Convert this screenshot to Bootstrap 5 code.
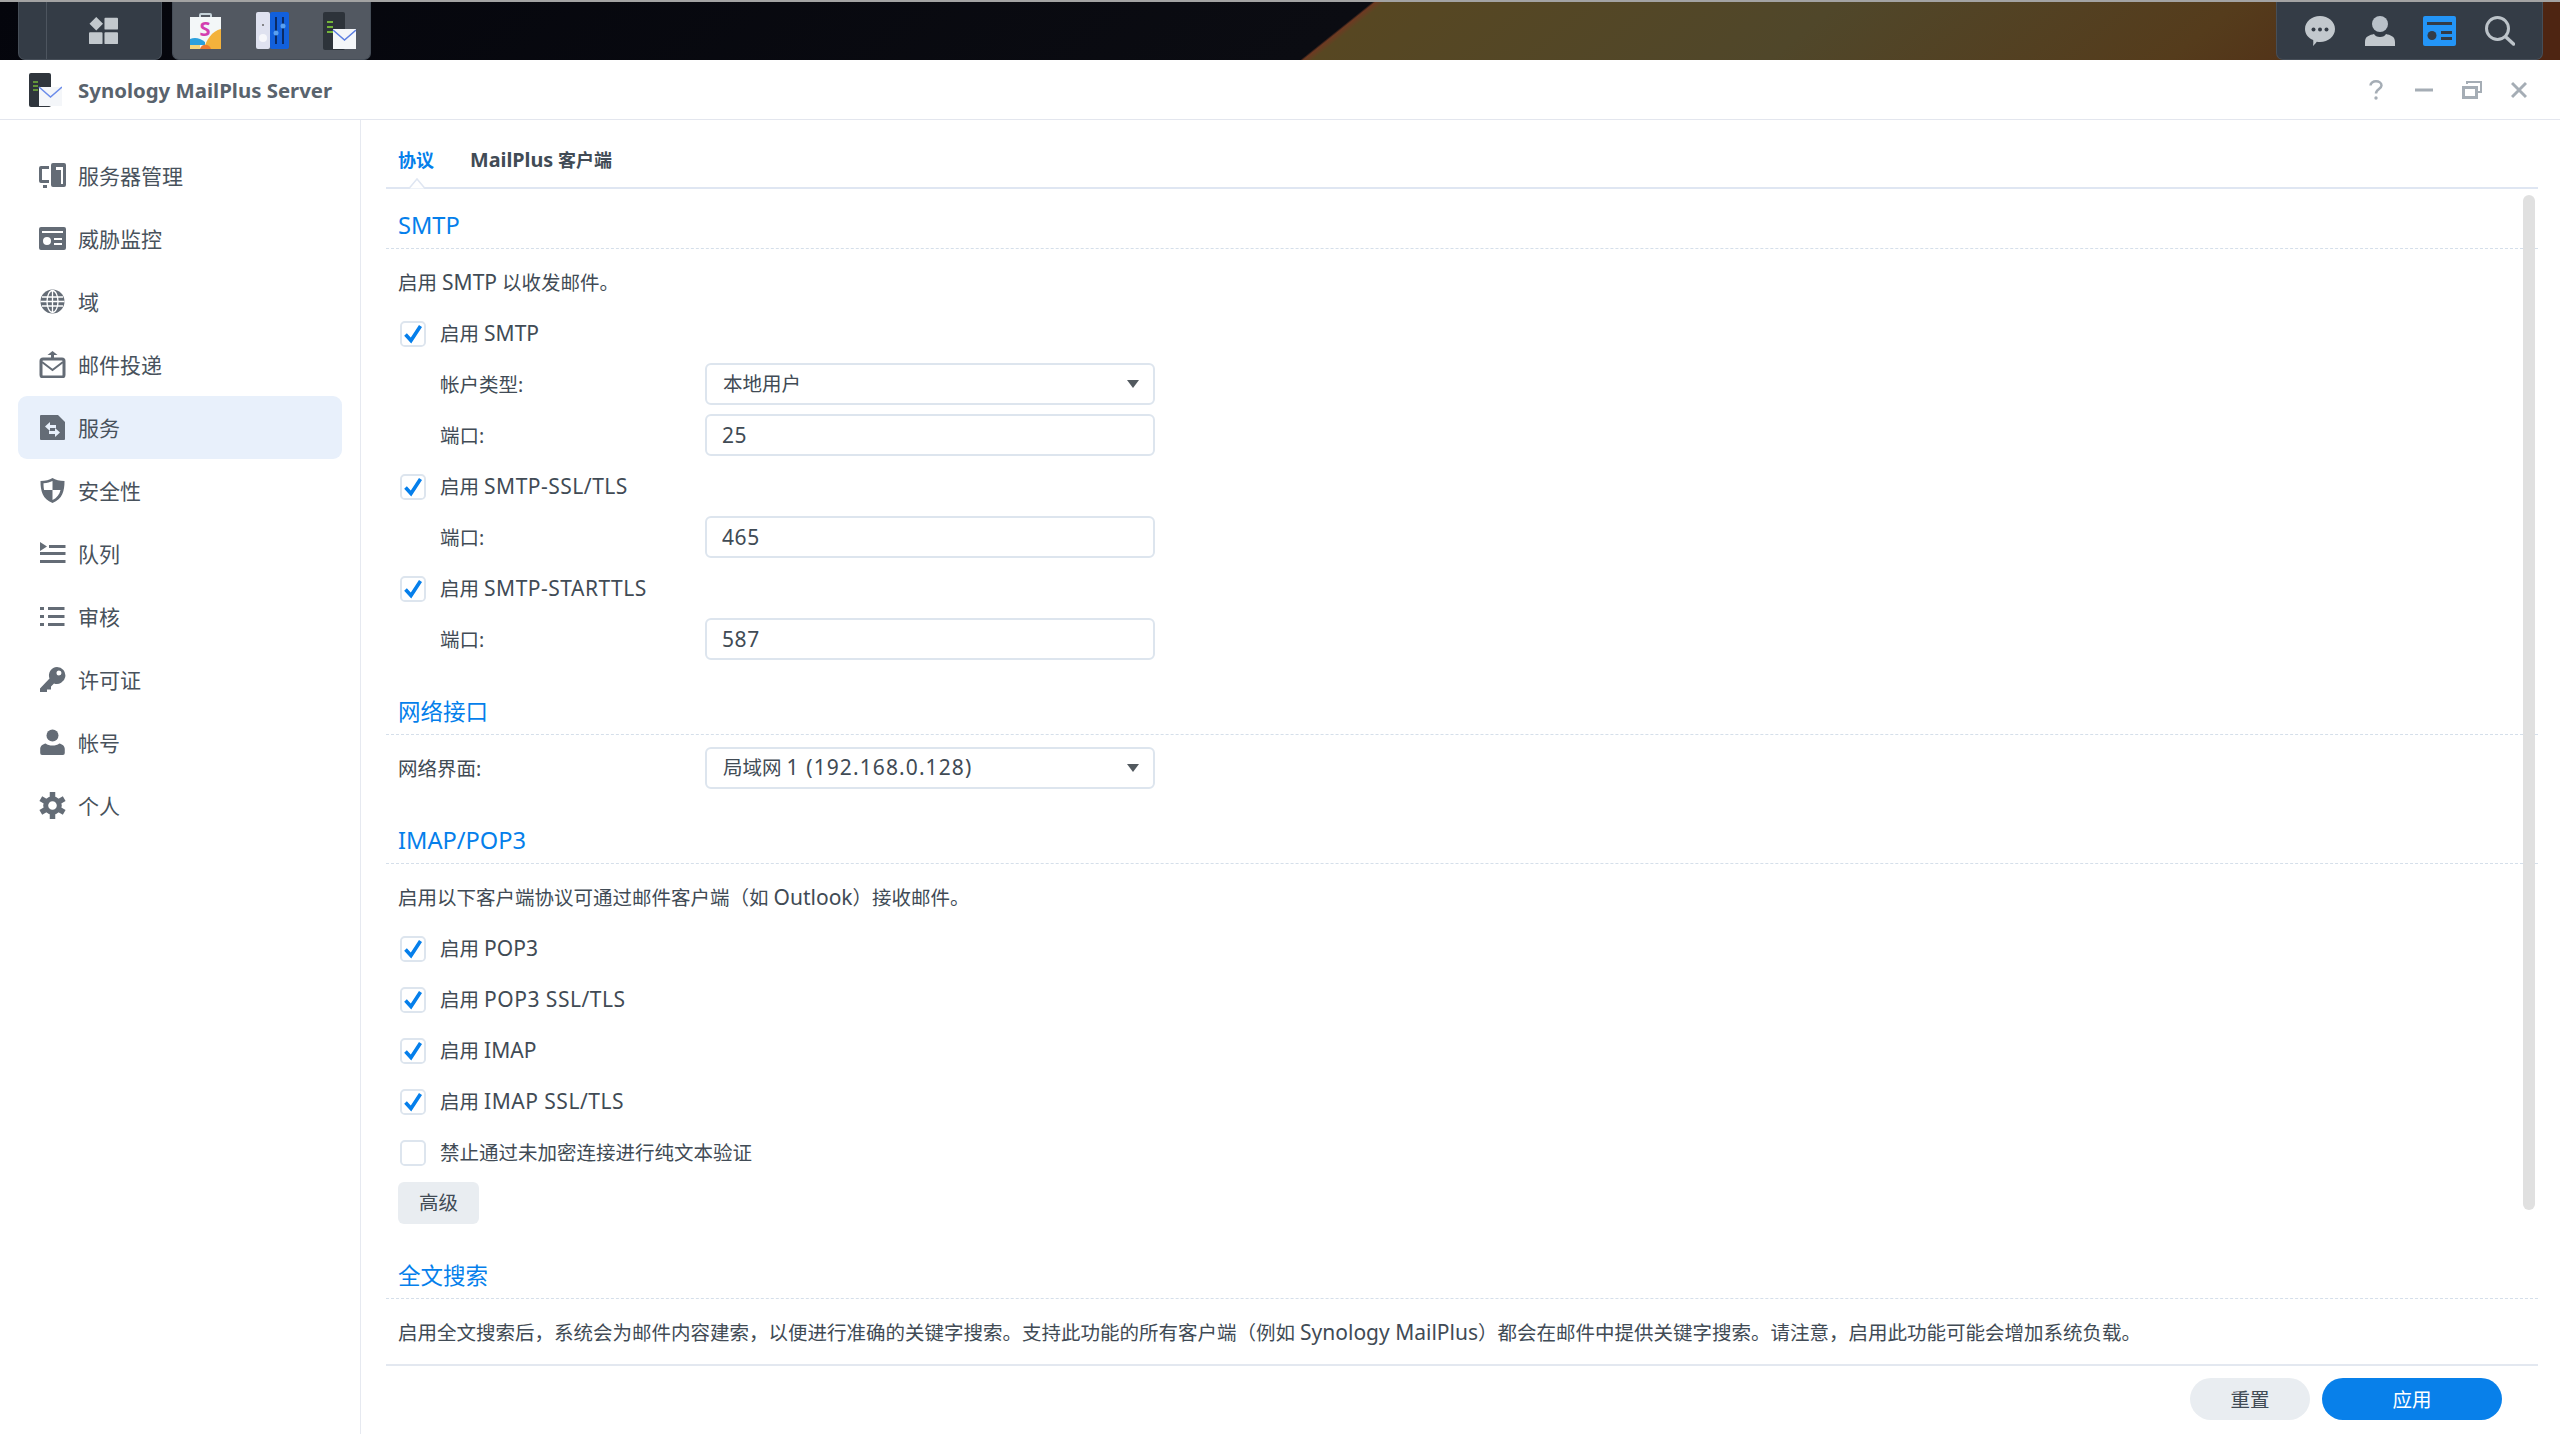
<!DOCTYPE html>
<html lang="zh-CN">
<head>
<meta charset="utf-8">
<title>Synology MailPlus Server</title>
<link href="https://cdn.jsdelivr.net/npm/bootstrap@5.3.0/dist/css/bootstrap.min.css" rel="stylesheet">
<style>
html,body{height:100%;margin:0;overflow:hidden}
body{font-family:"Noto Sans","Noto Sans CJK SC",sans-serif;font-size:19.5px;color:#414b55;background:#fff}
.lt{font-size:21px}
.lt-w{font-size:21px;letter-spacing:.5px}
.lt-n{font-size:21px;letter-spacing:1.1px}
.top-strip{height:60px;flex:none;border-top:2px solid #a3a3a3;background:linear-gradient(141.3deg,#04050c 0,#0b0c12 858px,#6e3a22 860px,#574722 866px,#50472a 1150px,#553c1c 1400px,#4e2512 1600px)}
.dock{background:#343c46;border:1px solid #464e58;border-top:0;border-radius:0 0 7px 7px;height:58px}
.dock-menu{width:144px;margin-left:18px}
.dock-sep{width:28px;border-right:1px solid #4d555f;height:100%;flex:none}
.dock-glyph{margin-left:42px}
.dock-apps{width:199px;margin-left:10px;background:#525861;padding-left:16px;gap:34px}
.dock-tray{width:267px;margin-left:auto;margin-right:17px;gap:30px;justify-content:center}
.tray-wide{margin:0 -1.5px}
.win-frame{flex:1;min-height:0;border-radius:6px 6px 0 0;background:#fff}
.win-title{height:60px;flex:none;border-bottom:1px solid #e3e6ee;padding-left:29px;padding-right:33px}
.win-name{font-weight:700;font-size:20.4px;color:#59636d;margin-left:16px;padding-top:2px}
.win-ctl{gap:29px}
.ctl-help{margin-right:3px}
.side-col{width:361px;flex:none;border-right:1px solid #e6e9f0;padding:24px 18px 0}
.side-item{height:63px;border-radius:9px;padding-left:21px;font-size:21px;color:#48525c}
.side-item svg{width:27px;height:27px;margin-right:12px;flex:none}
.side-txt{padding-top:2px}
.side-item.on{background:#e8f0fb}
.main-col{min-width:0}
.tab-strip{height:69px;flex:none;margin:0 22px 0 25px;border-bottom:2px solid #dfe6f2;padding-left:12px;gap:36px;position:relative}
.tab-link{font-weight:700;font-size:18px;color:#414b55;padding-top:27px;text-decoration:none}
.tab-link.mix{padding-top:25px}
.tab-link .tl{font-size:19.8px}
.tab-link.on{color:#057feb}
.tab-notch{position:absolute;left:21px;bottom:-2px;width:20px;height:12px}
.scroll-pane{flex:1;min-height:0;overflow:hidden;margin:0 22px 0 25px;padding-left:12px;position:relative}
.thumb-bar{position:absolute;right:3px;top:6px;width:12px;height:1015px;border-radius:6px;background:#e0e0e0}
.sec-head{height:60px;margin-left:-12px;padding-left:12px;padding-bottom:4px;border-bottom:1px dashed #d5dfea;font-size:22.5px;line-height:36px;color:#057feb;display:flex;align-items:flex-end;margin-top:10px;font-weight:400}
.sec-head.first{margin-top:0}
.sec-head.latin{font-size:23.6px;padding-bottom:5px}
.sec-head.gap-big{margin-top:15px}
.sec-body{margin-top:8px}
.f-row{height:51px;white-space:pre}
.f-row.ind{padding-left:42px}
.f-row .lbl{width:307px;flex:none}
.f-row.ind .lbl{width:265px}
.chk{width:26px;height:26px;margin:0 14px 0 2px!important;flex:none;border:2px solid #dde5ee;border-radius:6px;background-color:#fff;float:none}
.chk:checked{background-color:#fff;border-color:#dde5ee;background-size:22px 22px;background-image:url("data:image/svg+xml,%3csvg xmlns='http://www.w3.org/2000/svg' viewBox='0 0 22 22'%3e%3cpath fill='none' stroke='%23057feb' stroke-width='3.6' d='M3.500 11.500l5.500 6L18.500 3'/%3e%3c/svg%3e")}
.chk:focus{box-shadow:none;border-color:#dde5ee}
.fld{width:450px;height:42px;margin-bottom:1px;border:2px solid #dde5ee;border-radius:6px;font-size:19.5px;color:#414b55;padding:0 16px;box-shadow:none!important;white-space:pre}
.fld:focus{color:#414b55;border-color:#dde5ee}
input.fld{font-size:21px;letter-spacing:.6px;padding-left:15px}
.form-select.fld{background-size:16px 10px;background-position:right 12px center;background-image:url("data:image/svg+xml,%3csvg xmlns='http://www.w3.org/2000/svg' viewBox='0 0 16 10'%3e%3cpath fill='%2352595f' d='M2 1h12L8 9z'/%3e%3c/svg%3e")}
.btn-adv{width:81px;height:42px;padding:0;background:#e9edf1;border:0;border-radius:6px;color:#414b55;font-size:19.5px;margin-top:4px;display:block}
.foot-bar{height:70px;flex:none;margin:0 0 0 25px;padding:14px 58px 0 0;position:relative;gap:12px}
.foot-line{position:absolute;left:0;right:22px;top:0;border-top:2px solid #e3e8f0}
.pill{height:42px;border:0;border-radius:21px;padding:1px 0 0;font-size:19.5px}
.pill-a{width:120px;background:#e9edf1;color:#414b55}
.pill-b{width:180px;background:#0880ea;color:#fff}
</style>
</head>
<body class="d-flex flex-column">

<div class="top-strip d-flex">
  <div class="dock dock-menu d-flex align-items-center">
    <div class="dock-sep"></div>
    <svg class="dock-glyph" width="29" height="29" viewBox="0 0 30 32" preserveAspectRatio="none"><path fill="#c2c8cd" d="M7.500 1l7 7.500-7 7.500L.5 8.500zM17 2h12a1 1 0 0 1 1 1v11a1 1 0 0 1-1 1H17a1 1 0 0 1-1-1V3a1 1 0 0 1 1-1zM1 18h12a1 1 0 0 1 1 1v11a1 1 0 0 1-1 1H1a1 1 0 0 1-1-1V19a1 1 0 0 1 1-1zM17 18h12a1 1 0 0 1 1 1v11a1 1 0 0 1-1 1H17a1 1 0 0 1-1-1V19a1 1 0 0 1 1-1z"/></svg>
  </div>
  <div class="dock dock-apps d-flex align-items-center">
    <svg width="33" height="38" viewBox="0 0 33 38"><path fill="none" stroke="#c5d2d8" stroke-width="2" d="M11 6V3a1 1 0 0 1 1-1h9a1 1 0 0 1 1 1v3"/><path fill="#f3f7f8" d="M1 5h31v32H1z"/><path fill="#f3b23c" d="M32 17v20H15c2-9 8-18 17-20z"/><path fill="#2ba0dc" d="M1 27c5-2 10-1 15 3v3H1z"/><path fill="#ee7b30" d="M11 37c1-5 9-6 11 0z"/><path fill="#f4d57a" d="M1 33h10v4H1z"/><text x="16" y="24" font-size="20" font-weight="700" text-anchor="middle" fill="#d33fb0" font-family="Noto Sans">S</text></svg>
    <svg width="33" height="37" viewBox="0 0 33 37"><rect width="14" height="37" rx="2" fill="#dfe2f0"/><circle cx="7" cy="26" r="4" fill="#f6f7fb"/><circle cx="7" cy="13" r="1" fill="#666"/><rect x="14" width="19" height="37" rx="2" fill="#1260dc"/><path stroke="#0b2b66" stroke-width="2" d="M20 5v27M27 5v27"/><circle cx="20" cy="21" r="2.500" fill="#5aa0f0"/><circle cx="27" cy="14" r="2.500" fill="#5aa0f0"/></svg>
    <svg width="33" height="38" viewBox="0 0 33 38"><rect width="22" height="38" rx="2" fill="#2d333a"/><path stroke="#74b53a" stroke-width="2" d="M4 10h6M4 15h6M4 20h6"/><path fill="#f4f6f9" d="M10 17h23v20H10z"/><path fill="none" stroke="#5c7ee0" stroke-width="1.500" d="M10 18l11.500 10L33 18"/></svg>
  </div>
  <div class="dock dock-tray d-flex align-items-center">
    <svg width="30" height="30" viewBox="0 0 30 30"><path fill="#c2c8cd" d="M15 0c8.300 0 15 5.700 15 13S23.300 26 15 26c-1.200 0-2 0-3.200-.3C10 28 8 30 8 30c.4-2 .4-4 .2-6C3.300 22 0 18 0 13 0 5.700 6.700 0 15 0z"/><circle cx="8.500" cy="13.500" r="2" fill="#343c46"/><circle cx="15" cy="13.500" r="2" fill="#343c46"/><circle cx="21.500" cy="13.500" r="2" fill="#343c46"/></svg>
    <svg width="30" height="30" viewBox="0 0 30 30"><circle cx="15" cy="8" r="8" fill="#b9c1c9"/><path fill="#c2c8cd" d="M0 30v-4c0-6 5-7 9-8 1 2 3 3 6 3s5-1 6-3c4 1 9 2 9 8v4z"/></svg>
    <svg class="tray-wide" width="33" height="30" viewBox="0 0 33 30"><rect width="33" height="30" rx="2" fill="#2395f7"/><path fill="#343c46" d="M4 6h25v3H4zM18 15h11v3H18zM18 21h11v3H18z"/><circle cx="9" cy="19.500" r="4.500" fill="#343c46"/></svg>
    <svg width="30" height="30" viewBox="0 0 30 30"><circle cx="12.500" cy="12.500" r="11" fill="none" stroke="#bcc3c9" stroke-width="3"/><path stroke="#bcc3c9" stroke-width="3.500" stroke-linecap="round" d="M21.500 21.500l7 6.500"/></svg>
  </div>
</div>

<div class="win-frame d-flex flex-column">
  <div class="win-title d-flex align-items-center">
    <svg width="33" height="34" viewBox="0 0 33 34"><rect width="22" height="34" rx="2" fill="#2f353c"/><path stroke="#74b53a" stroke-width="1.500" d="M4 9h5M4 13h5M4 17h5"/><path fill="#f4f6f9" d="M10 14l11.500 0L33 14v19H10z"/><path fill="none" stroke="#6b8cea" stroke-width="1.500" d="M10 14l11.500 10L33 14"/></svg>
    <span class="win-name">Synology MailPlus Server</span>
    <div class="win-ctl d-flex align-items-center ms-auto">
      <svg class="ctl-help" width="14" height="20" viewBox="0 0 14 20"><path fill="none" stroke="#a5adb5" stroke-width="2.500" d="M1.500 5.500C1.500 3 4 1.300 7 1.300s5.500 1.700 5.500 4.200c0 3.500-5.500 3.500-5.500 8"/><circle cx="7" cy="18" r="1.700" fill="#a5adb5"/></svg>
      <svg width="18" height="20" viewBox="0 0 18 20"><path stroke="#a5adb5" stroke-width="3" d="M0 10h18"/></svg>
      <svg width="20" height="20" viewBox="0 0 20 20"><path fill="none" stroke="#a5adb5" stroke-width="2" d="M5 4V2h14v10h-3"/><path fill="none" stroke="#a5adb5" stroke-width="3" d="M1.500 7.500h13v10h-13z"/></svg>
      <svg width="16" height="20" viewBox="0 0 16 20"><path stroke="#a5adb5" stroke-width="3" d="M1 3l14 14M15 3L1 17"/></svg>
    </div>
  </div>

  <div class="d-flex flex-grow-1" style="min-height:0">
    <nav class="side-col">
      <div class="side-item d-flex align-items-center"><svg viewBox="0 0 27 27"><path fill="#646c76" d="M14 1h11a2 2 0 0 1 2 2v20a2 2 0 0 1-2 2H14a2 2 0 0 1-2-2V3a2 2 0 0 1 2-2zm3 4v3h5v14h2V5z" fill-rule="evenodd"/><path fill="#646c76" d="M2 4h8v3H3v11h7v3H2a2 2 0 0 1-2-2V6a2 2 0 0 1 2-2zM4 23h4v3H4z"/></svg><span class="side-txt">服务器管理</span></div>
      <div class="side-item d-flex align-items-center"><svg viewBox="0 0 27 27"><path fill="#646c76" fill-rule="evenodd" d="M2 2h23a2 2 0 0 1 2 2v19a2 2 0 0 1-2 2H2a2 2 0 0 1-2-2V4a2 2 0 0 1 2-2zm1 4v2h21V6zM15 13v2h8v-2zM15 18v2h8v-2zM8 12a4 4 0 1 0 0 8 4 4 0 0 0 0-8z"/></svg><span class="side-txt">威胁监控</span></div>
      <div class="side-item d-flex align-items-center"><svg viewBox="0 0 27 27"><circle cx="13.500" cy="13.500" r="12" fill="#646c76"/><g fill="none" stroke="#fff" stroke-width="1.300"><ellipse cx="13.500" cy="13.500" rx="5.500" ry="11"/><path d="M13.500 2v23M3 9h21M3 18h21M1.500 13.500h24"/></g></svg><span class="side-txt">域</span></div>
      <div class="side-item d-flex align-items-center"><svg viewBox="0 0 27 27"><path fill="#646c76" d="M13.500 0l5 4h-10zM12 4h3v4h-3z"/><rect x="2" y="8" width="23" height="18" rx="2" fill="none" stroke="#646c76" stroke-width="3"/><path fill="none" stroke="#646c76" stroke-width="2" d="M3 11l10.500 8L24 11"/></svg><span class="side-txt">邮件投递</span></div>
      <div class="side-item on d-flex align-items-center"><svg viewBox="0 0 27 27"><path fill="#646c76" d="M2 1h17l7 7v17a1 1 0 0 1-1 1H2a1 1 0 0 1-1-1V2a1 1 0 0 1 1-1z"/><path fill="#e8f0fb" d="M6 11.500l5-4.500v3h6v3h-6v3zM21 17.500l-5-4.500v3h-6v3h6v3z" transform="translate(0 1)"/></svg><span class="side-txt">服务</span></div>
      <div class="side-item d-flex align-items-center"><svg viewBox="0 0 27 27"><path fill="#646c76" d="M13.500 1c3 2 7 3 12 3 0 10-2 18-12 22C3.500 22 1.500 14 1.500 4c5 0 9-1 12-3z"/><path fill="#fff" d="M13.500 4c-2.500 1.300-5 2-9 2.300 0 2 .1 4.700.6 6.700h8.400zM13.500 13v10c4.500-2.200 7-5.500 8-10z"/></svg><span class="side-txt">安全性</span></div>
      <div class="side-item d-flex align-items-center"><svg viewBox="0 0 27 27"><path fill="#646c76" d="M1 2l7 4.500L1 11zM10 5h16.500v3H10zM10 12h16.500v3H1v-3zM1 20h25.500v3H1z"/></svg><span class="side-txt">队列</span></div>
      <div class="side-item d-flex align-items-center"><svg viewBox="0 0 27 27"><path fill="#646c76" d="M1 4h4v3H1zM9 4h16.500v3H9zM1 12h4v3H1zM9 12h16.500v3H9zM1 20h4v3H1zM9 20h16.500v3H9z"/></svg><span class="side-txt">审核</span></div>
      <div class="side-item d-flex align-items-center"><svg viewBox="0 0 27 27"><path fill="#646c76" fill-rule="evenodd" d="M18 1a8.500 8.500 0 1 1-3 16.500L12 20.500v3H8v2.500H3l-2 0v-3.500L10.500 12.500A8.500 8.500 0 0 1 18 1zm2 3.500a2.500 2.500 0 1 0 0 5 2.500 2.500 0 0 0 0-5z"/></svg><span class="side-txt">许可证</span></div>
      <div class="side-item d-flex align-items-center"><svg viewBox="0 0 27 27"><circle cx="13.500" cy="6.500" r="6" fill="#646c76"/><path fill="#646c76" d="M2 26a2 2 0 0 1-2-2v-4c0-3 3-5 6-5.500 2 1.500 4.500 2 7.500 2s5.500-.5 7.500-2c3 .5 6 2.500 6 5.500v4a2 2 0 0 1-2 2z" transform="translate(1.200 0) scale(.91 1)"/></svg><span class="side-txt">帐号</span></div>
      <div class="side-item d-flex align-items-center"><svg viewBox="0 0 27 27"><circle cx="13.500" cy="13.500" r="6.800" fill="none" stroke="#646c76" stroke-width="5"/><path stroke="#646c76" stroke-width="5.500" d="M13.500 0v5M13.500 22v5M1.800 6.700l4.300 2.500M20.900 17.800l4.300 2.500M1.800 20.300l4.300-2.500M20.900 9.200l4.300-2.500"/></svg><span class="side-txt">个人</span></div>
    </nav>

    <main class="main-col d-flex flex-column flex-grow-1">
      <div class="tab-strip d-flex">
        <a class="tab-link on" href="#">协议</a>
        <a class="tab-link mix" href="#"><span class="tl">MailPlus</span> 客户端</a>
        <svg class="tab-notch" viewBox="0 0 20 12"><path fill="#fff" stroke="#dfe6f2" stroke-width="1.500" d="M0 11.500h2L10 2l8 9.500h2"/></svg>
      </div>

      <div class="scroll-pane">
        <div class="thumb-bar"></div>
        <h2 class="sec-head latin first">SMTP</h2>
        <div class="sec-body">
          <div class="f-row d-flex align-items-center"><span>启用 <span class="lt">SMTP</span> 以收发邮件。</span></div>
          <div class="f-row d-flex align-items-center"><input class="form-check-input chk" type="checkbox" checked><span>启用 <span class="lt">SMTP</span></span></div>
          <div class="f-row ind d-flex align-items-center"><span class="lbl">帐户类型:</span><div class="form-select fld d-flex align-items-center" role="combobox" aria-expanded="false">本地用户</div></div>
          <div class="f-row ind d-flex align-items-center"><span class="lbl">端口:</span><input class="form-control fld" value="25"></div>
          <div class="f-row d-flex align-items-center"><input class="form-check-input chk" type="checkbox" checked><span>启用 <span class="lt-w">SMTP-SSL/TLS</span></span></div>
          <div class="f-row ind d-flex align-items-center"><span class="lbl">端口:</span><input class="form-control fld" value="465"></div>
          <div class="f-row d-flex align-items-center"><input class="form-check-input chk" type="checkbox" checked><span>启用 <span class="lt-w">SMTP-STARTTLS</span></span></div>
          <div class="f-row ind d-flex align-items-center"><span class="lbl">端口:</span><input class="form-control fld" value="587"></div>
        </div>
        <h2 class="sec-head">网络接口</h2>
        <div class="sec-body">
          <div class="f-row d-flex align-items-center"><span class="lbl">网络界面:</span><div class="form-select fld d-flex align-items-center" role="combobox" aria-expanded="false"><span>局域网 <span class="lt-n">1 (192.168.0.128)</span></span></div></div>
        </div>
        <h2 class="sec-head latin">IMAP/POP3</h2>
        <div class="sec-body">
          <div class="f-row d-flex align-items-center"><span>启用以下客户端协议可通过邮件客户端（如 <span class="lt">Outlook</span>）接收邮件。</span></div>
          <div class="f-row d-flex align-items-center"><input class="form-check-input chk" type="checkbox" checked><span>启用 <span class="lt">POP3</span></span></div>
          <div class="f-row d-flex align-items-center"><input class="form-check-input chk" type="checkbox" checked><span>启用 <span class="lt-w">POP3 SSL/TLS</span></span></div>
          <div class="f-row d-flex align-items-center"><input class="form-check-input chk" type="checkbox" checked><span>启用 <span class="lt">IMAP</span></span></div>
          <div class="f-row d-flex align-items-center"><input class="form-check-input chk" type="checkbox" checked><span>启用 <span class="lt-w">IMAP SSL/TLS</span></span></div>
          <div class="f-row d-flex align-items-center"><input class="form-check-input chk" type="checkbox"><span>禁止通过未加密连接进行纯文本验证</span></div>
          <button class="btn btn-adv" type="button">高级</button>
        </div>
        <h2 class="sec-head gap-big">全文搜索</h2>
        <div class="sec-body">
          <div class="f-row d-flex align-items-center"><span>启用全文搜索后，系统会为邮件内容建索，以便进行准确的关键字搜索。支持此功能的所有客户端（例如 <span class="lt">Synology MailPlus</span>）都会在邮件中提供关键字搜索。请注意，启用此功能可能会增加系统负载。</span></div>
        </div>
      </div>

      <div class="foot-bar d-flex justify-content-end">
        <div class="foot-line"></div>
        <button class="btn pill pill-a" type="button">重置</button>
        <button class="btn pill pill-b" type="button">应用</button>
      </div>
    </main>
  </div>
</div>
<script src="https://cdn.jsdelivr.net/npm/bootstrap@5.3.0/dist/js/bootstrap.bundle.min.js"></script>
</body>
</html>
